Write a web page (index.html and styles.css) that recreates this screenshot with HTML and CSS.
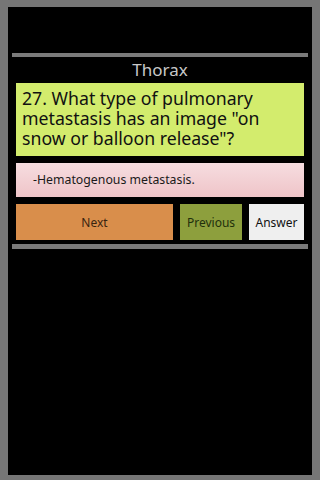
FILE: index.html
```html
<!DOCTYPE html>
<html>
<head>
<meta charset="utf-8">
<link rel="stylesheet" href="styles.css">
</head>
<body>
<div class="panel">
  <div class="bar"></div>
  <div class="title">Thorax</div>
  <div class="question">27. What type of pulmonary metastasis has an image "on snow or balloon release"?</div>
  <div class="answer-box">-Hematogenous metastasis.</div>
  <div class="buttons">
    <div class="btn btn-next">Next</div>
    <div class="btn btn-prev">Previous</div>
    <div class="btn btn-answer">Answer</div>
  </div>
  <div class="bar bar-bottom"></div>
</div>
</body>
</html>
```

FILE: styles.css
```css
html, body {
  margin: 0;
  padding: 0;
  background: #767676;
  width: 320px;
  height: 480px;
  overflow: hidden;
  font-family: "Noto Sans", "Open Sans", sans-serif;
}
.panel {
  margin: 7px 0 0 8px;
  width: 304px;
  height: 468px;
  background: #000;
  padding-top: 46px;
  box-sizing: border-box;
  display: flex;
  flex-direction: column;
}
.bar {
  margin: 0 4px;
  height: 4px;
  background: #7a7a7a;
}
.title {
  height: 26px;
  color: #c8c8c8;
  font-size: 17px;
  line-height: 26px;
  text-align: center;
}
.question {
  margin: 0 8px;
  height: 73px;
  box-sizing: border-box;
  background: #d3ec6d;
  color: #111;
  font-size: 17.7px;
  line-height: 20px;
  padding: 5px 6px 0 6px;
}
.answer-box {
  margin: 7px 8px 0 8px;
  height: 34px;
  box-sizing: border-box;
  background: linear-gradient(#f6dde0, #efc4c8);
  color: #1a1a1a;
  font-size: 12.3px;
  line-height: 34px;
  padding-left: 17px;
}
.buttons {
  margin: 7px 8px 0 8px;
  height: 36px;
  display: flex;
  gap: 7px;
}
.btn {
  display: flex;
  align-items: center;
  justify-content: center;
  font-size: 12px;
}
.btn-next {
  width: 157px;
  background: #d98e4b;
  color: #3a2410;
}
.btn-prev {
  width: 62px;
  background: #8d9f3d;
  color: #22300c;
}
.btn-answer {
  width: 55px;
  background: #efefef;
  color: #111;
}
.bar-bottom {
  margin-top: 4px;
  height: 5px;
}
```
